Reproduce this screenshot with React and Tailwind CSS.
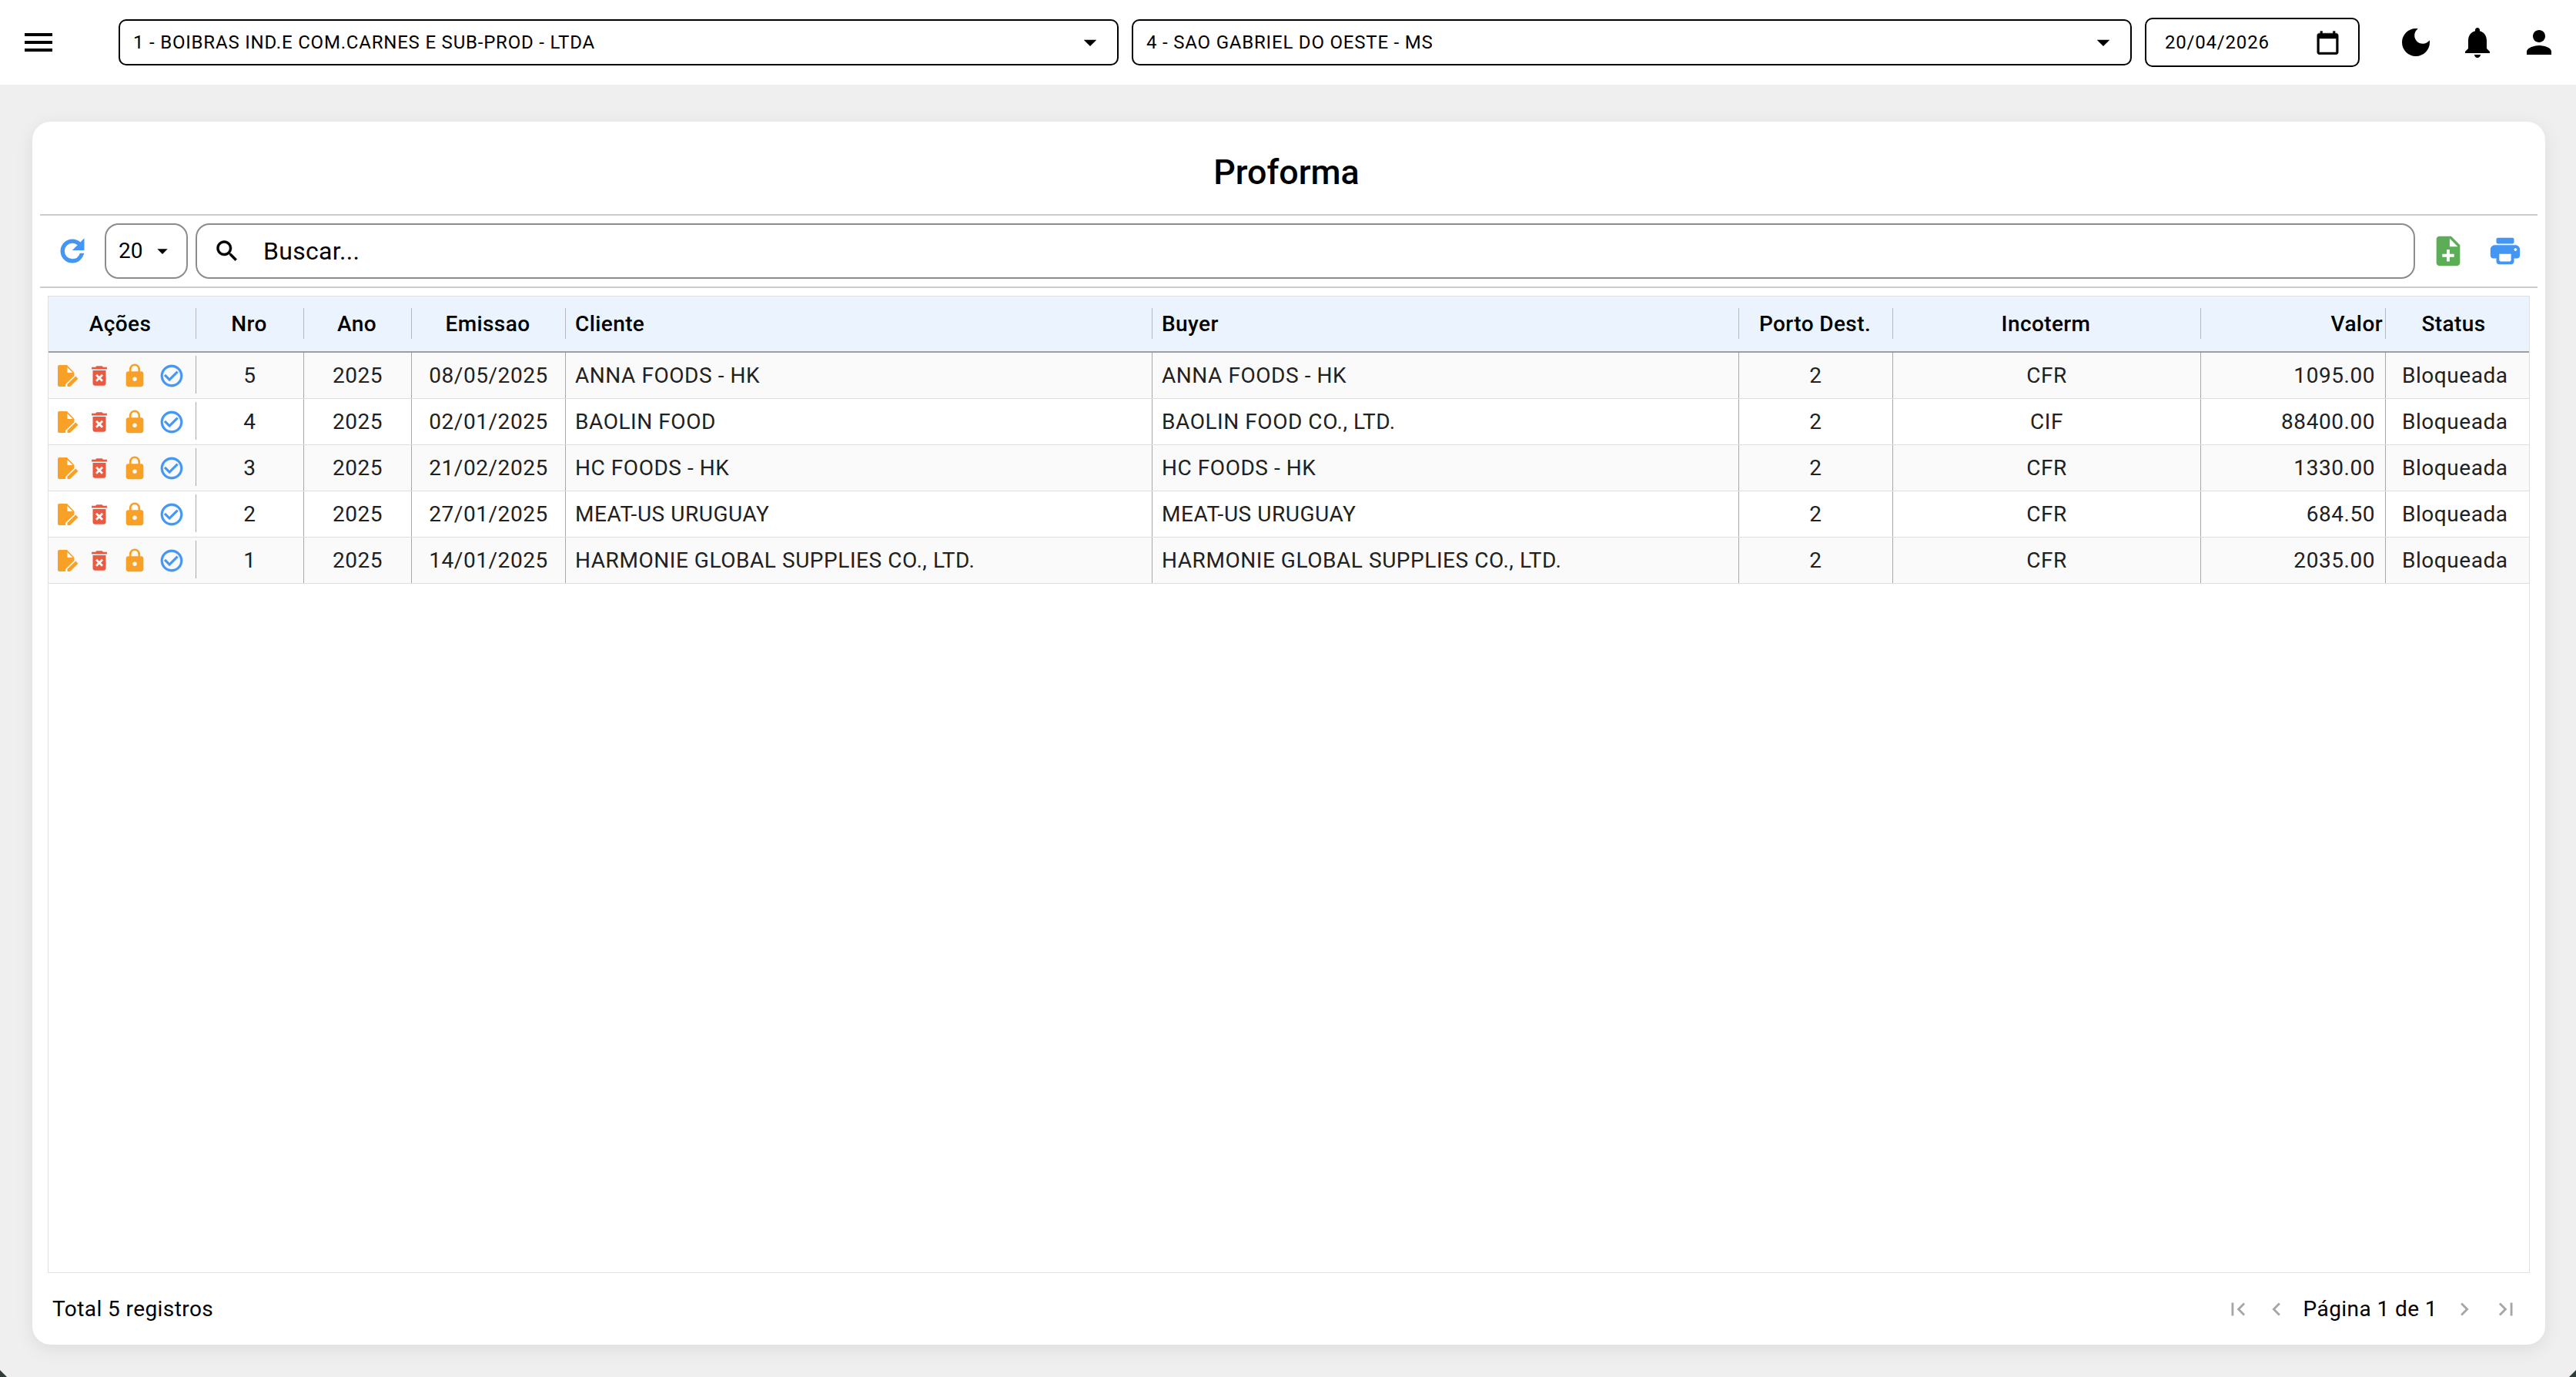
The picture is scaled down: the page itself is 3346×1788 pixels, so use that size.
const ICONS = {
  menu: 'M3 18h18v-2H3zM3 13h18v-2H3zM3 6v2h18V6z',
  drop: 'm7 10 5 5 5-5z',
  calendar: 'M20 3h-1V1h-2v2H7V1H5v2H4c-1.1 0-2 .9-2 2v16c0 1.1.9 2 2 2h16c1.1 0 2-.9 2-2V5c0-1.1-.9-2-2-2zm0 18H4V8h16v13z',
  moon: 'M12 3c-4.97 0-9 4.03-9 9s4.03 9 9 9 9-4.03 9-9c0-.46-.04-.92-.1-1.36-.98 1.37-2.58 2.26-4.4 2.26-2.98 0-5.4-2.42-5.4-5.4 0-1.81.89-3.42 2.26-4.4-.44-.06-.9-.1-1.36-.1z',
  bell: 'M12 22c1.1 0 2-.9 2-2h-4c0 1.1.89 2 2 2zm6-6v-5c0-3.07-1.64-5.64-4.5-6.32V4c0-.83-.67-1.5-1.5-1.5s-1.5.67-1.5 1.5v.68C7.63 5.36 6 7.92 6 11v5l-2 2v1h16v-1l-2-2z',
  person: 'M12 12c2.21 0 4-1.79 4-4s-1.79-4-4-4-4 1.79-4 4 1.79 4 4 4zm0 2c-2.67 0-8 1.34-8 4v2h16v-2c0-2.66-5.33-4-8-4z',
  refresh: 'M17.65 6.35C16.2 4.9 14.21 4 12 4c-4.42 0-7.99 3.58-7.99 8s3.57 8 7.99 8c3.73 0 6.84-2.55 7.73-6h-2.08c-.82 2.33-3.04 4-5.65 4-3.31 0-6-2.69-6-6s2.69-6 6-6c1.66 0 3.14.69 4.22 1.78L13 11h7V4l-2.35 2.35z',
  search: 'M15.5 14h-.79l-.28-.27C15.41 12.59 16 11.11 16 9.5 16 5.91 13.09 3 9.5 3S3 5.91 3 9.5 5.91 16 9.5 16c1.61 0 3.09-.59 4.23-1.57l.27.28v.79l5 4.99L20.49 19l-4.99-5zm-6 0C7.01 14 5 11.99 5 9.5S7.01 5 9.5 5 14 7.01 14 9.5 11.99 14 9.5 14z',
  noteAdd: 'M14 2H6c-1.1 0-1.99.9-1.99 2L4 20c0 1.1.89 2 1.99 2H18c1.1 0 2-.9 2-2V8l-6-6zm2 14h-3v3h-2v-3H8v-2h3v-3h2v3h3v2zm-3-7V3.5L18.5 9H13z',
  print: 'M19 8H5c-1.66 0-3 1.34-3 3v4c0 1.1.9 2 2 2h2v2c0 1.1.9 2 2 2h8c1.1 0 2-.9 2-2v-2h2c1.1 0 2-.9 2-2v-4c0-1.66-1.34-3-3-3zm-4 11H9c-.55 0-1-.45-1-1v-4h8v4c0 .55-.45 1-1 1zm4-7c-.55 0-1-.45-1-1s.45-1 1-1 1 .45 1 1-.45 1-1 1zm-2-9H7c-.55 0-1 .45-1 1v2c0 .55.45 1 1 1h10c.55 0 1-.45 1-1V4c0-.55-.45-1-1-1z',
  trash: 'M6 19c0 1.1.9 2 2 2h8c1.1 0 2-.9 2-2V7H6v12zm2.46-7.12 1.41-1.41L12 12.59l2.12-2.12 1.41 1.41L13.41 14l2.12 2.12-1.41 1.41L12 15.41l-2.12 2.12-1.41-1.41L10.59 14l-2.13-2.12zM15.5 4l-1-1h-5l-1 1H5v2h14V4z',
  lock: 'M18 8h-1V6c0-2.76-2.24-5-5-5S7 3.24 7 6v2H6c-1.1 0-2 .9-2 2v10c0 1.1.9 2 2 2h12c1.1 0 2-.9 2-2V10c0-1.1-.9-2-2-2zm-6 9c-1.1 0-2-.9-2-2s.9-2 2-2 2 .9 2 2-.9 2-2 2zm3.1-9H8.9V6c0-1.71 1.39-3.1 3.1-3.1 1.71 0 3.1 1.39 3.1 3.1v2z',
  check: 'M16.59 7.58 10 14.17l-3.59-3.58L5 12l5 5 8-8zM12 2C6.48 2 2 6.48 2 12s4.48 10 10 10 10-4.48 10-10S17.52 2 12 2zm0 18c-4.42 0-8-3.58-8-8s3.58-8 8-8 8 3.58 8 8-3.58 8-8 8z',
  first: 'M18.41 16.59 13.82 12l4.59-4.59L17 6l-6 6 6 6zM6 6h2v12H6z',
  prev: 'M15.41 7.41 14 6l-6 6 6 6 1.41-1.41L10.83 12z',
  next: 'M10 6 8.59 7.41 13.17 12l-4.58 4.59L10 18l6-6z',
  last: 'M5.59 7.41 10.18 12l-4.59 4.59L7 18l6-6-6-6zM16 6h2v12h-2z',
}

function Icon({ name, className, bold = 0 }) {
  return (
    <svg viewBox="0 0 24 24" fill="currentColor" stroke="currentColor" strokeWidth={bold} className={className}>
      <path d={ICONS[name]} />
    </svg>
  )
}

function EditDocIcon() {
  return (
    <svg viewBox="0 0 28 28" className="w-[28px] h-[28px] shrink-0 text-[#f9a026]" fill="currentColor">
      <path fillRule="evenodd" d="M3 0h10l9.5 10v4L11 25v3H3a2 2 0 0 1-2-2V2a2 2 0 0 1 2-2zM13.5 3v7h7z" />
      <path d="M13.5 28v-3.2L24.3 14.6l3.2 3.1L17 28z" />
    </svg>
  )
}

const COLS = 'grid grid-cols-[192px_140px_140px_200px_762px_762px_200px_400px_240px_186px]'

const rows = [
  { nro: 5, emissao: '08/05/2025', cliente: 'ANNA FOODS - HK', buyer: 'ANNA FOODS - HK', incoterm: 'CFR', valor: '1095.00' },
  { nro: 4, emissao: '02/01/2025', cliente: 'BAOLIN FOOD', buyer: 'BAOLIN FOOD CO., LTD.', incoterm: 'CIF', valor: '88400.00' },
  { nro: 3, emissao: '21/02/2025', cliente: 'HC FOODS - HK', buyer: 'HC FOODS - HK', incoterm: 'CFR', valor: '1330.00' },
  { nro: 2, emissao: '27/01/2025', cliente: 'MEAT-US URUGUAY', buyer: 'MEAT-US URUGUAY', incoterm: 'CFR', valor: '684.50' },
  { nro: 1, emissao: '14/01/2025', cliente: 'HARMONIE GLOBAL SUPPLIES CO., LTD.', buyer: 'HARMONIE GLOBAL SUPPLIES CO., LTD.', incoterm: 'CFR', valor: '2035.00' },
]

function TopSelect({ label }) {
  return (
    <div className="w-[1299px] h-[60px] shrink-0 flex items-center justify-between border-2 border-black rounded-[10px] pl-[17px] pr-[15px]">
      <span className="text-[24px] tracking-[0.8px] text-black">{label}</span>
      <Icon name="drop" className="w-[40px] h-[40px]" />
    </div>
  )
}

function HeadCell({ children, className = '' }) {
  return (
    <div className={`relative flex items-center text-[28px] tracking-[0.4px] font-medium text-black ${className}`}>
      {children}
      <span className="absolute right-0 top-[15px] h-[40px] w-[1px] bg-[#b4b8bd]" />
    </div>
  )
}

function Cell({ children, className = '' }) {
  return (
    <div className={`flex items-center border-r border-[#a8a8a8] text-[28px] tracking-[0.55px] text-[#212121] ${className}`}>
      {children}
    </div>
  )
}

function Row({ row, striped }) {
  return (
    <div className={`${COLS} h-[60px] border-b border-[#dedede] ${striped ? 'bg-[#fafafa]' : 'bg-white'}`}>
      <div className="relative flex items-center">
        <span className="ml-[11px]"><EditDocIcon /></span>
        <Icon name="trash" className="w-[34px] h-[34px] ml-[10px] text-[#ea5a41]" />
        <Icon name="lock" className="w-[34px] h-[34px] ml-[12px] text-[#f9a026]" />
        <Icon name="check" bold={0.3} className="w-[34px] h-[34px] ml-[14px] text-[#4496f5]" />
        <span className="absolute right-0 top-[4px] h-[49px] w-[1px] bg-[#a8a8a8]" />
      </div>
      <Cell className="justify-center">{row.nro}</Cell>
      <Cell className="justify-center">2025</Cell>
      <Cell className="justify-center">{row.emissao}</Cell>
      <Cell className="pl-[12px]">{row.cliente}</Cell>
      <Cell className="pl-[12px]">{row.buyer}</Cell>
      <Cell className="justify-center">2</Cell>
      <Cell className="justify-center">{row.incoterm}</Cell>
      <Cell className="justify-end pr-[13px]">{row.valor}</Cell>
      <div className="flex items-center pl-[21px] text-[28px] tracking-[0.55px] text-[#212121]">Bloqueada</div>
    </div>
  )
}

export default function App() {
  return (
    <div className="relative h-[1788px] w-[3346px] overflow-hidden bg-[#efefef] font-['Roboto',sans-serif]">
      <header className="h-[110px] bg-white flex items-center pl-[26px]">
        <Icon name="menu" className="w-[48px] h-[48px] mr-[80px]" />
        <TopSelect label="1 - BOIBRAS IND.E COM.CARNES E SUB-PROD - LTDA" />
        <div className="w-[17px]" />
        <TopSelect label="4 - SAO GABRIEL DO OESTE - MS" />
        <div className="w-[17px]" />
        <div className="w-[279px] h-[64px] flex items-center justify-between border-2 border-black rounded-[10px] pl-[24px] pr-[23px]">
          <span className="text-[24px] tracking-[0.8px] text-black">20/04/2026</span>
          <Icon name="calendar" bold={0.3} className="w-[33px] h-[33px]" />
        </div>
        <div className="flex items-center gap-[32px] ml-[49px]">
          <Icon name="moon" className="w-[48px] h-[48px]" />
          <Icon name="bell" className="w-[48px] h-[48px]" />
          <Icon name="person" className="w-[48px] h-[48px]" />
        </div>
      </header>

      <main className="mt-[48px] ml-[42px] w-[3264px] h-[1588px] bg-white rounded-[24px] shadow-[0_6px_24px_rgba(0,0,0,0.08)] flex flex-col">
        <h1 className="h-[120px] pt-[12px] pr-[6px] flex items-center justify-center text-[44.8px] font-medium text-black">Proforma</h1>
        <div className="mx-[10px] h-[2px] bg-[#cccccc]" />

        <div className="h-[92px] flex items-center pl-[30px]">
          <Icon name="refresh" bold={0.9} className="w-[44px] h-[44px] text-[#4496f5]" />
          <div className="ml-[20px] w-[108px] h-[72px] flex items-center border-2 border-[#8c8c8c] rounded-[18px] pl-[16px]">
            <span className="text-[28px] text-black">20</span>
            <Icon name="drop" className="w-[32px] h-[32px] ml-[10px]" />
          </div>
          <div className="ml-[10px] w-[2883px] h-[72px] flex items-center border-2 border-[#8c8c8c] rounded-[18px] pl-[21px]">
            <Icon name="search" bold={0.3} className="w-[36px] h-[36px]" />
            <span className="ml-[29px] text-[32px] tracking-[0.3px] text-black">Buscar...</span>
          </div>
          <Icon name="noteAdd" className="ml-[20px] w-[46px] h-[46px] text-[#5bad56]" />
          <Icon name="print" className="ml-[28px] w-[46px] h-[46px] text-[#4496f5]" />
        </div>
        <div className="mx-[10px] h-[2px] bg-[#cccccc]" />

        <div className="mt-[10px] mx-[20px] flex-1 border border-[#e0e0e0]">
          <div className={`${COLS} h-[73px] bg-[#ebf3fe] border-b-2 border-[#9e9e9e]`}>
            <HeadCell className="justify-center pr-[6px]">Ações</HeadCell>
            <HeadCell className="justify-center pr-[3px]">Nro</HeadCell>
            <HeadCell className="justify-center pr-[3px]">Ano</HeadCell>
            <HeadCell className="justify-center pr-[3px]">Emissao</HeadCell>
            <HeadCell className="pl-[12px]">Cliente</HeadCell>
            <HeadCell className="pl-[12px]">Buyer</HeadCell>
            <HeadCell className="justify-center pr-[3px]">Porto Dest.</HeadCell>
            <HeadCell className="justify-center pr-[3px]">Incoterm</HeadCell>
            <HeadCell className="justify-end pr-[4px]">Valor</HeadCell>
            <div className="flex items-center justify-center pr-[10px] text-[28px] tracking-[0.4px] font-medium text-black">Status</div>
          </div>
          {rows.map((row, i) => (
            <Row key={row.nro} row={row} striped={i % 2 === 0} />
          ))}
        </div>

        <footer className="h-[93px] flex items-center justify-between pl-[26px] pr-[34px] text-[28px] tracking-[0.42px] text-black">
          <span>Total 5 registros</span>
          <div className="flex items-center text-[#a6a6a6]">
            <Icon name="first" className="w-[34px] h-[34px]" />
            <Icon name="prev" className="w-[34px] h-[34px] ml-[16px]" />
            <span className="ml-[18px] mr-[18px] text-black">Página 1 de 1</span>
            <Icon name="next" className="w-[34px] h-[34px]" />
            <Icon name="last" className="w-[34px] h-[34px] ml-[20px]" />
          </div>
        </footer>
      </main>

      <span className="absolute left-0 bottom-0 w-0 h-0 border-l-[9px] border-t-[9px] border-l-[#2c3d3a] border-t-transparent" />
      <span className="absolute right-0 bottom-0 w-0 h-0 border-r-[9px] border-t-[9px] border-r-[#2c3d3a] border-t-transparent" />
    </div>
  )
}
